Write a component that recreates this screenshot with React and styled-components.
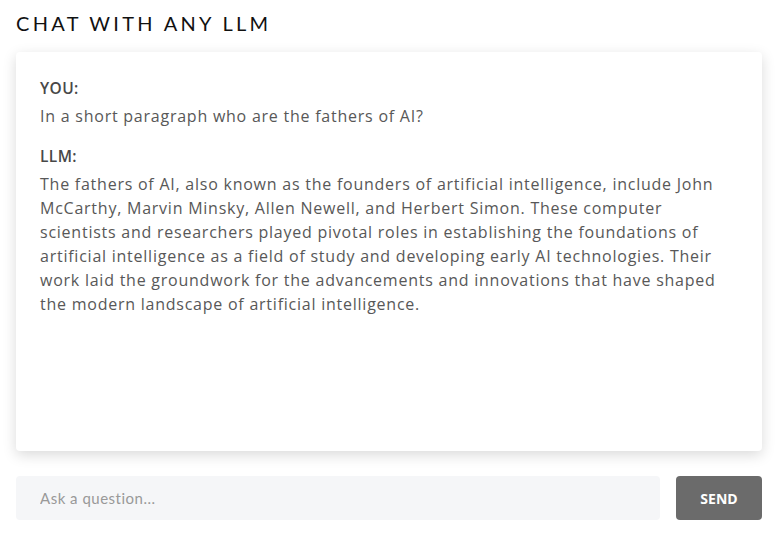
import React from "react";
import styled, { createGlobalStyle } from "styled-components";

const GlobalStyle = createGlobalStyle`
  body {
    margin: 0;
    background: #fff;
    font-family: "Open Sans", "Lato", sans-serif;
  }
`;

const Page = styled.div`
  padding: 10px 16px 16px;
  box-sizing: border-box;
  width: 778px;
`;

const Title = styled.h1`
  margin: 0 0 16px;
  font-family: "Lato", sans-serif;
  font-size: 20px;
  font-weight: 400;
  letter-spacing: 3.3px;
  color: #111;
  line-height: 26px;
`;

const Card = styled.div`
  background: #fff;
  border-radius: 4px;
  box-shadow: 0 4px 14px rgba(0, 0, 0, 0.15);
  height: 399px;
  padding: 24px;
  box-sizing: border-box;
  display: flex;
  flex-direction: column;
  gap: 16px;
`;

const Message = styled.div`
  display: flex;
  flex-direction: column;
  gap: 4px;
`;

const Author = styled.div`
  font-size: 15.5px;
  font-weight: 600;
  color: #484848;
  letter-spacing: 0.4px;
  line-height: 24px;
`;

const Text = styled.p`
  margin: 0;
  font-size: 16px;
  color: #585858;
  letter-spacing: 0.76px;
  line-height: 24px;
`;

const InputRow = styled.form`
  display: flex;
  gap: 16px;
  margin-top: 25px;
`;

const Input = styled.input`
  flex: 1;
  height: 44px;
  border: none;
  border-radius: 4px;
  background: #f5f6f8;
  padding: 0 24px;
  font-family: "Lato", sans-serif;
  font-size: 15px;
  letter-spacing: 0.5px;
  color: #333;
  outline: none;
  &::placeholder {
    color: #999;
  }
`;

const SendButton = styled.button`
  width: 86px;
  height: 44px;
  border: none;
  border-radius: 4px;
  background: #6b6b6b;
  color: #fff;
  font-family: inherit;
  font-weight: 700;
  font-size: 14px;
  cursor: pointer;
`;

export default function App() {
  return (
    <>
      <GlobalStyle />
      <Page>
        <Title>CHAT WITH ANY LLM</Title>
        <Card>
          <Message>
            <Author>YOU:</Author>
            <Text>In a short paragraph who are the fathers of AI?</Text>
          </Message>
          <Message>
            <Author>LLM:</Author>
            <Text>
              The fathers of AI, also known as the founders of artificial
              intelligence, include John McCarthy, Marvin Minsky, Allen Newell,
              and Herbert Simon. These computer scientists and researchers
              played pivotal roles in establishing the foundations of
              artificial intelligence as a field of study and developing early
              AI technologies. Their work laid the groundwork for the
              advancements and innovations that have shaped the modern
              landscape of artificial intelligence.
            </Text>
          </Message>
        </Card>
        <InputRow onSubmit={(e) => e.preventDefault()}>
          <Input placeholder="Ask a question..." />
          <SendButton type="submit">SEND</SendButton>
        </InputRow>
      </Page>
    </>
  );
}
